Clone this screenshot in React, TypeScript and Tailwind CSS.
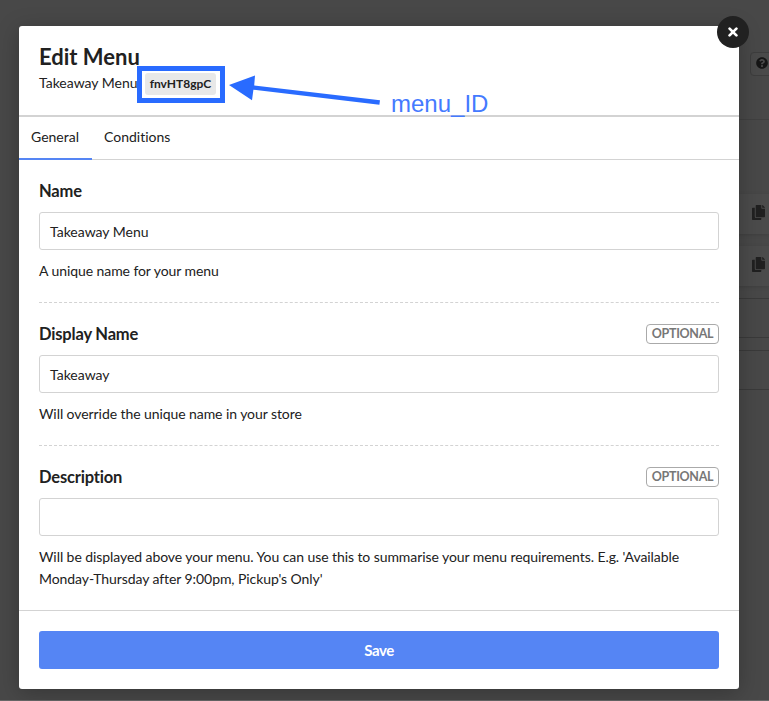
import React from "react";
import { FaCopy, FaQuestionCircle } from "react-icons/fa";

function Backdrop() {
  return (
    <div className="flex h-full flex-col items-end overflow-hidden border-b border-[#686868] bg-[#484848] pt-[52px]">
      <div className="flex h-6 w-[70px] shrink-0 justify-end">
        <div className="-mr-1 flex w-[23px] items-center rounded border border-[#3d3d3d] bg-[#4a4a4a] pl-[5px]">
          <FaQuestionCircle className="mb-0.5 size-3 shrink-0 text-[#161616]" />
        </div>
      </div>
      <div className="mt-[43px] h-px w-20 shrink-0 bg-[#404040]" />
      <div className="mt-[74px] flex w-20 flex-col gap-3">
        {[0, 1].map((i) => (
          <div key={i} className="flex h-10 items-center justify-end bg-[#4b4b4b] pr-1 shadow-[0_1px_4px_rgba(0,0,0,0.12)]">
            <FaCopy className="mb-1 h-[15px] w-[13px] text-[#202020]" />
          </div>
        ))}
        {[0, 1].map((i) => (
          <div key={i} className="h-10 border-y border-[#3a3a3a]" />
        ))}
      </div>
    </div>
  );
}

function Field({ label, value, help, optional }: { label: string; value: string; help: string; optional?: boolean }) {
  return (
    <div className="border-b border-dashed border-[#d3d3d3] pb-5 last:border-0">
      <div className="flex h-[22px] items-center justify-between">
        <label className="text-[16.5px] leading-[22px] font-bold tracking-[-0.18px]">{label}</label>
        {optional && (
          <span className="flex h-5 w-[73px] items-center justify-center rounded-[4px] border border-[#aaa] text-[12.5px] font-bold tracking-[-0.3px] text-[#777]">
            OPTIONAL
          </span>
        )}
      </div>
      <div className="mt-[10px] flex h-[38px] items-center rounded-[3px] border border-[#d3d3d3] px-[10px] pt-px text-sm">{value}</div>
      <p className="mt-[10px] text-sm leading-[22px] tracking-[-0.075px]">{help}</p>
    </div>
  );
}

export default function App() {
  return (
    <div className="relative h-[701px] w-[769px] overflow-hidden font-['Lato',sans-serif] text-[#212121] [font-variant-ligatures:none]">
      <Backdrop />
      <div className="absolute top-[26px] left-[19px] flex h-[663px] w-[720px] flex-col rounded-[3px] bg-white shadow-[0_4px_22px_rgba(0,0,0,0.25)]">
        <header className="h-[91px] shrink-0 border-b-2 border-[#d3d3d3] px-5 pt-[17px]">
          <h1 className="text-[22px] leading-7 font-bold">Edit Menu</h1>
          <div className="flex h-[26px] items-center text-sm">
            <span className="w-[98px] pb-0.5 whitespace-nowrap">Takeaway Menu</span>
            <span className="ml-2 flex h-[22px] w-[71px] items-center justify-center rounded-[3px] bg-[#e8e8e8] text-[12px] font-bold">fnvHT8gpC</span>
          </div>
        </header>
        <nav className="flex h-[43px] shrink-0 border-b border-[#d3d3d3] text-sm">
          <div className="h-[43px] w-[73px] border-b-2 border-[#5585f4] pt-[9px] pl-3 leading-[22px]">General</div>
          <div className="px-3 pt-[9px] leading-[22px]">Conditions</div>
        </nav>
        <main className="flex flex-1 flex-col gap-5 px-5 pt-5">
          <Field label="Name" value="Takeaway Menu" help="A unique name for your menu" />
          <Field label="Display Name" value="Takeaway" help="Will override the unique name in your store" optional />
          <Field
            label="Description"
            value=""
            help="Will be displayed above your menu. You can use this to summarise your menu requirements. E.g. 'Available Monday-Thursday after 9:00pm, Pickup's Only'"
            optional
          />
        </main>
        <footer className="h-[79px] shrink-0 border-t border-[#d3d3d3] px-5 pt-5">
          <button className="h-[38px] w-full rounded-[3px] bg-[#5585f4] pt-px text-[15px] font-bold tracking-[-0.4px] text-white">Save</button>
        </footer>
      </div>
      <button aria-label="Close" className="absolute top-4 left-[717px] flex size-8 items-center justify-center rounded-full bg-[#212121]">
        <svg className="size-[10px]" viewBox="0 0 10 10" fill="none" stroke="white" strokeWidth="2.7" strokeLinecap="round">
          <path d="M1.6 1.6 8.4 8.4M8.4 1.6 1.6 8.4" />
        </svg>
      </button>
      <div className="absolute top-[66px] left-[137px] h-[37px] w-[88px] border-5 border-[#296bff]" />
      <svg className="absolute top-[70px] left-[225px] h-10 w-40" viewBox="225 70 160 40">
        <path d="M229 85 255 75.5 254.2 85.4 380 100.2 379.4 104.7 253.4 89.8 252 100.3Z" fill="#296bff" />
      </svg>
      <span className="absolute top-[90px] left-[391px] font-['Liberation_Sans',Arial,sans-serif] text-2xl leading-7 text-[#447aff]">menu_ID</span>
    </div>
  );
}
